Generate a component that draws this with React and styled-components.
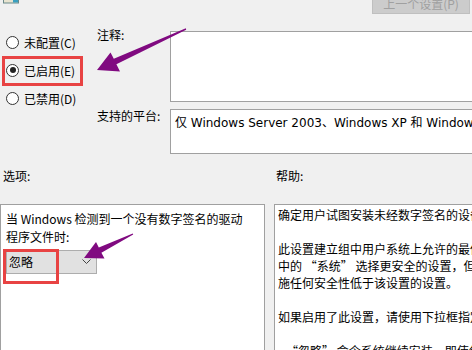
import React from 'react'
import styled, { createGlobalStyle } from 'styled-components'

const Global = createGlobalStyle`
    html, body {
        margin: 0;
        padding: 0;
        background: #f0f0f0;
        overflow: hidden;
    }
`
const Page = styled.div`
    position: relative;
    width: 472px;
    height: 350px;
    overflow: hidden;
    background: #f0f0f0;
    color: #000;
    font-family: "Noto Sans CJK SC", "Noto Sans", "Liberation Sans", sans-serif;
    font-size: 12px;
`
const TopBar = styled.div`
    height: 28px;
    display: flex;
    justify-content: space-between;
    align-items: flex-start;
`
const WinIcon = styled.svg`
    margin-left: 3px;
    width: 16px;
    height: 4px;
`
const PrevButton = styled.div`
    margin-top: -8px;
    margin-right: 2px;
    width: 98px;
    height: 22px;
    box-sizing: border-box;
    background: #cccccc;
    border: 1px solid #bfbfbf;
    color: #a0a0a0;
    display: flex;
    align-items: center;
    justify-content: center;
    white-space: nowrap;
`
const Settings = styled.div`
    display: flex;
`
const RadioGroup = styled.div`
    width: 97px;
    flex-shrink: 0;
`
const RadioRow = styled.div`
    height: 28px;
    display: flex;
    align-items: center;
    gap: 5px;
    padding-left: 6px;
    white-space: nowrap;
`
const Circle = styled.span`
    width: 11px;
    height: 11px;
    border: 1px solid #333;
    border-radius: 50%;
    background: #fff;
    display: flex;
    align-items: center;
    justify-content: center;
    &::after {
        content: '';
        width: 6px;
        height: 6px;
        border-radius: 50%;
        background: ${p => (p.checked ? '#222' : 'transparent')};
    }
`
const Fields = styled.div`
    flex: 1;
    display: flex;
    flex-direction: column;
    gap: 7px;
`
const FieldRow = styled.div`
    display: flex;
    align-items: flex-start;
`
const Label = styled.div`
    width: 73px;
    flex-shrink: 0;
    line-height: 14px;
    white-space: nowrap;
`
const Box = styled.div`
    box-sizing: border-box;
    width: 320px;
    flex-shrink: 0;
    height: ${p => p.h}px;
    margin-top: ${p => p.mt || 0}px;
    background: #fff;
    border: 1px solid #a0a0a0;
    padding: 4px 4px;
    line-height: 16px;
    white-space: nowrap;
    overflow: hidden;
`
const PlatformText = styled.span`
    font-family: "DejaVu Sans", "Noto Sans CJK SC", sans-serif;
    font-size: 12px;
`
const SectionLabels = styled.div`
    display: flex;
    margin-top: 14px;
    line-height: 16px;
`
const SectionLabel = styled.div`
    width: ${p => p.w || 'auto'};
    padding-left: ${p => p.pl || 0}px;
    flex-shrink: 0;
`
const Panels = styled.div`
    display: flex;
    gap: 9px;
    margin-top: 20px;
`
const OptionsPanel = styled.div`
    box-sizing: border-box;
    width: 265px;
    height: 160px;
    flex-shrink: 0;
    background: #fff;
    border: 1px solid #a0a0a0;
    padding: 5px 5px;
    line-height: 18px;
`
const HelpPanel = styled.div`
    box-sizing: border-box;
    width: 320px;
    height: 160px;
    flex-shrink: 0;
    background: #fff;
    border: 1px solid #a0a0a0;
    padding: 1px 3px;
    line-height: 17px;
    white-space: pre;
    overflow: hidden;
`
const HelpLine = styled.div`
    height: 17px;
`
const Select = styled.div`
    box-sizing: border-box;
    margin-top: 4px;
    width: 91px;
    height: 24px;
    background: #e1e1e1;
    border: 1px solid #adadad;
    display: flex;
    align-items: center;
    justify-content: space-between;
    padding: 0 5px 0 2px;
`
const Chevron = styled.svg`
    width: 9px;
    height: 6px;
`
const RedBox = styled.div`
    position: absolute;
    box-sizing: border-box;
    border: 3px solid #e84343;
`
const Overlay = styled.svg`
    position: absolute;
    left: 0;
    top: 0;
    pointer-events: none;
`

const helpLines = [
  '确定用户试图安装未经数字签名的设备驱动程序时的系统响应。',
  '',
  '此设置建立组中用户系统上允许的最低安全响应。用户可',
  '中的 “系统” 选择更安全的设置，但是此设置启用时，',
  '施任何安全性低于该设置的设置。',
  '',
  '如果启用了此设置，请使用下拉框指定所需的响应。',
  '',
  '   “忽略” 命令系统继续安装，即使包含未签名的文件。',
]

export default function App() {
  return (
    <Page>
      <Global />
      <TopBar>
        <WinIcon viewBox="0 0 16 4">
          <rect x="0.5" y="-2" width="15" height="5" fill="#e8e4d0" stroke="#6a8a8a" />
          <rect x="10" y="0" width="5" height="2.5" fill="#3aa0c0" />
        </WinIcon>
        <PrevButton>上一个设置(P)</PrevButton>
      </TopBar>
      <Settings>
        <RadioGroup>
          <RadioRow><Circle />未配置(C)</RadioRow>
          <RadioRow><Circle checked />已启用(E)</RadioRow>
          <RadioRow><Circle />已禁用(D)</RadioRow>
        </RadioGroup>
        <Fields>
          <FieldRow>
            <Label>注释:</Label>
            <Box h={71} mt={3} />
          </FieldRow>
          <FieldRow>
            <Label>支持的平台:</Label>
            <Box h={45}>
              <PlatformText>仅 Windows Server 2003、Windows XP 和 Windows 2000</PlatformText>
            </Box>
          </FieldRow>
        </Fields>
      </Settings>
      <SectionLabels>
        <SectionLabel w="273px" pl={3}>选项:</SectionLabel>
        <SectionLabel>帮助:</SectionLabel>
      </SectionLabels>
      <Panels>
        <OptionsPanel>
          <div>当 Windows 检测到一个没有数字签名的驱动</div>
          <div>程序文件时:</div>
          <Select>
            <span>忽略</span>
            <Chevron viewBox="0 0 9 6">
              <path d="M0.5 0.5 L4.5 4.5 L8.5 0.5" fill="none" stroke="#444" strokeWidth="1" />
            </Chevron>
          </Select>
        </OptionsPanel>
        <HelpPanel>
          {helpLines.map((l, i) => <HelpLine key={i}>{l}</HelpLine>)}
        </HelpPanel>
      </Panels>

      <RedBox style={{ left: 2, top: 56, width: 81, height: 30 }} />
      <RedBox style={{ left: 3, top: 249, width: 56, height: 35 }} />
      <Overlay width="472" height="350" viewBox="0 0 472 350">
        <polygon
          fill="#800a80"
          points="97,70 110.5,52.5 113.8,58.8 185.8,28.3 186.2,29.7 116.4,64.2 120,71.5"
        />
        <polygon
          fill="#800a80"
          points="84,258 96,242 98.8,247.4 132.8,233.4 133.2,234.6 101.4,252.8 104.5,258.5"
        />
      </Overlay>
    </Page>
  )
}
